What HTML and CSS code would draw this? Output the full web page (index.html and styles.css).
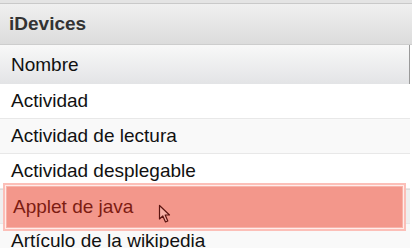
FILE: index.html
```html
<!DOCTYPE html>
<html>
<head>
<meta charset="utf-8">
<link rel="stylesheet" href="styles.css">
</head>
<body>
<div class="panel">
  <div class="topstrip"></div>
  <div class="header">iDevices</div>
  <div class="list">
    <div class="colhead">Nombre</div>
    <div class="row">Actividad</div>
    <div class="row alt">Actividad de lectura</div>
    <div class="row">Actividad desplegable</div>
    <div class="row dragged"></div>
    <div class="row alt">Artículo de la wikipedia</div>
  </div>
  <div class="ghost">
    <div class="ghost-inner">Applet de java</div>
    <svg class="cursor" width="14" height="20" viewBox="0 0 14 20">
      <path d="M1.5 1.5 L1.5 15 L4.8 12 L7.5 18 L9.8 17 L7.2 11 L11.5 11 Z" fill="#f6b0a6" stroke="#5a1410" stroke-width="1.2" stroke-linejoin="round"/>
    </svg>
  </div>
</div>
</body>
</html>
```
FILE: styles.css
```css
html, body {
  margin: 0;
  padding: 0;
  background: #ffffff;
}
body {
  font-family: "Liberation Sans", Arial, sans-serif;
  width: 412px;
  height: 248px;
  overflow: hidden;
}
.panel {
  position: relative;
  width: 412px;
}
.topstrip {
  height: 3px;
  background: #e4e4e4;
  border-bottom: 1px solid #c9c9c9;
}
.header {
  height: 41px;
  box-sizing: border-box;
  padding: 0 9px;
  display: flex;
  align-items: center;
  font-size: 19px;
  font-weight: bold;
  color: #333333;
  background: linear-gradient(#f0f0f0, #dcdcdc);
  border-bottom: 1px solid #cdcdcd;
}
.list {
  width: 410px;
}
.colhead {
  height: 39px;
  box-sizing: border-box;
  padding: 0 11px;
  display: flex;
  align-items: center;
  font-size: 19px;
  color: #111111;
  background: linear-gradient(#f8f8f8, #e3e4e6);
  border-right: 1px solid #9a9a9a;
}
.row {
  height: 35px;
  box-sizing: border-box;
  padding: 0 11px;
  display: flex;
  align-items: center;
  font-size: 19px;
  color: #111111;
  background: #ffffff;
  border-bottom: 1px solid #e8e8e8;
}
.row.alt {
  background: #f9f9f9;
}
.row.dragged {
  background: #efefef;
  border-top: 1px solid #dcdcdc;
}
.ghost {
  position: absolute;
  left: 3px;
  top: 183px;
  width: 403px;
  height: 48px;
  box-sizing: border-box;
  border: 2px solid rgba(250, 160, 150, 0.6);
  background: rgba(255, 235, 232, 0.9);
  padding: 1px;
}
.ghost-inner {
  height: 100%;
  box-sizing: border-box;
  background: #f3978b;
  border: 1px solid #f7b3aa;
  padding: 0 6px;
  display: flex;
  align-items: center;
  font-size: 19px;
  color: #7d1c12;
}
.cursor {
  position: absolute;
  left: 153px;
  top: 19px;
}
```
